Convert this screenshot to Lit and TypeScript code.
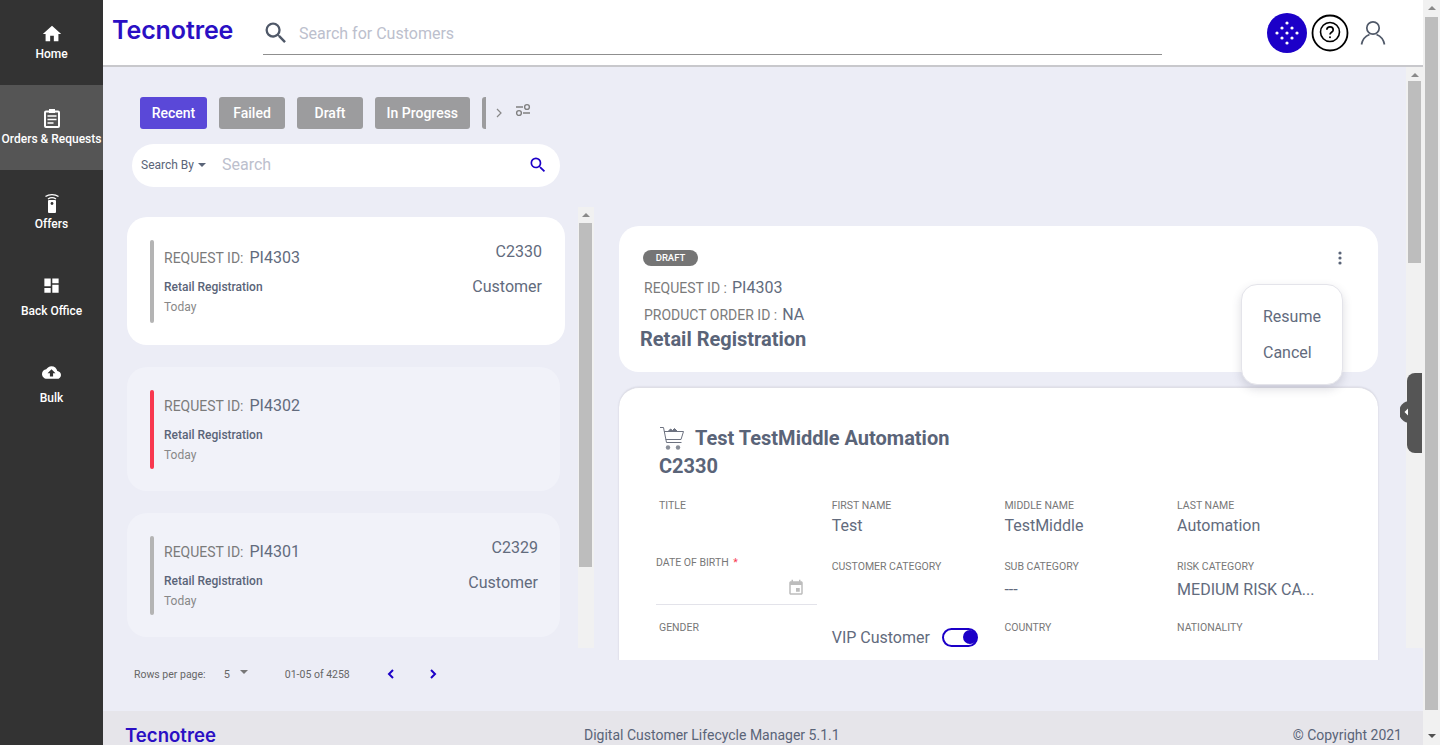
import { LitElement, css, html, svg } from 'lit'
import { customElement } from 'lit/decorators.js'

const paths = {
  home: 'M10 20v-6h4v6h5v-8h3L12 3 2 12h3v8z',
  dashboard: 'M3 13h8V3H3v10zm0 8h8v-6H3v6zm10 0h8V11h-8v10zm0-18v6h8V3h-8z',
  cloud: 'M19.35 10.04C18.67 6.59 15.64 4 12 4 9.11 4 6.6 5.64 5.35 8.04 2.34 8.36 0 10.91 0 14c0 3.31 2.69 6 6 6h13c2.76 0 5-2.24 5-5 0-2.64-2.05-4.78-4.65-4.96zM14 13v4h-4v-4H7l5-5 5 5h-3z',
  search: 'M15.5 14h-.79l-.28-.27A6.47 6.47 0 0 0 16 9.5 6.5 6.5 0 1 0 9.5 16c1.61 0 3.09-.59 4.23-1.57l.27.28v.79l5 4.99L20.49 19l-4.99-5zm-6 0C7.01 14 5 11.99 5 9.5S7.01 5 9.5 5 14 7.01 14 9.5 11.99 14 9.5 14z',
  calendar: 'M17 12h-5v5h5v-5zM16 1v2H8V1H6v2H5c-1.11 0-1.99.9-1.99 2L3 19c0 1.1.89 2 2 2h14c1.1 0 2-.9 2-2V5c0-1.1-.9-2-2-2h-1V1h-2zm3 18H5V8h14v11z',
}

const icon = (d: string, size: number, fill = 'currentColor') => html`
  <svg width=${size} height=${size} viewBox="0 0 24 24" fill=${fill}><path d=${d}></path></svg>
`

const ordersIcon = html`
  <svg width="18" height="20" viewBox="0 0 18 20" fill="none" stroke="#fff">
    <rect x="2" y="3.5" width="14" height="15.5" rx="1" stroke-width="2"></rect>
    <rect x="6" y="1" width="6" height="4" fill="#fff" stroke="none"></rect>
    <path d="M4.5 8h9M4.5 11.5h9M4.5 15h6" stroke-width="1.6"></path>
  </svg>
`

const offersIcon = html`
  <svg width="18" height="20" viewBox="0 0 18 20" fill="none">
    <path d="M2.5 3.6C6 .9 12 .9 15.5 3.6M5 6C7.4 4.4 10.6 4.4 13 6" stroke="#fff" stroke-width="1.3"></path>
    <rect x="5" y="7" width="8" height="13" rx="1" fill="#fff"></rect>
    <circle cx="9" cy="10.5" r="1.4" fill="#333"></circle>
  </svg>
`

const sparkIcon = svg`
  ${[[0, -10], [-5, -5], [5, -5], [-10, 0], [0, 0], [10, 0], [-5, 5], [5, 5], [0, 10]].map(
    ([x, y]) => svg`<circle cx=${20 + x} cy=${20 + y} r="1.6" fill="#fff"></circle>`,
  )}
`

const navItems = [
  { label: 'Home', icon: icon(paths.home, 22) },
  { label: 'Orders & Requests', icon: ordersIcon, active: true },
  { label: 'Offers', icon: offersIcon },
  { label: 'Back Office', icon: icon(paths.dashboard, 19) },
  { label: 'Bulk', icon: icon(paths.cloud, 19) },
]

const tabs = ['Recent', 'Failed', 'Draft', 'In Progress']

const requests = [
  { id: 'PI4303', selected: true, customer: 'C2330', status: 'grey' },
  { id: 'PI4302', selected: false, customer: '', status: 'red' },
  { id: 'PI4301', selected: false, customer: 'C2329', status: 'grey' },
]

@customElement('app-root')
export class AppRoot extends LitElement {
  renderNav() {
    return html`
      <nav class="nav">
        ${navItems.map(
          (item) => html`
            <div class="nav-item ${item.active ? 'active' : ''}">
              <span class="nav-icon">${item.icon}</span>
              <span>${item.label}</span>
            </div>
          `,
        )}
      </nav>
    `
  }

  renderHeader() {
    return html`
      <header class="header">
        <span class="logo">Tecnotree</span>
        <div class="global-search">
          <span class="global-search-icon">${icon(paths.search, 28, '#4f5868')}</span>
          <span>Search for Customers</span>
        </div>
        <div class="header-actions">
          <svg width="40" height="40" viewBox="0 0 40 40">
            <circle cx="20" cy="20" r="20" fill="#1c00c8"></circle>
            ${sparkIcon}
          </svg>
          <svg width="38" height="38" viewBox="0 0 38 38" fill="none" stroke="#000">
            <circle cx="19" cy="19" r="17.5" stroke-width="1.8"></circle>
            <circle cx="19" cy="18" r="9.5" stroke-width="1.6"></circle>
            <path d="M15.8 15.8c.3-4 6.4-3.8 6.4.1 0 2.4-3.2 2.4-3.2 4.7" stroke-width="1.7"></path>
            <circle cx="19" cy="23.2" r="1" fill="#000" stroke="none"></circle>
          </svg>
          <svg class="user" width="26" height="26" viewBox="0 0 26 26" fill="none" stroke="#4f5868" stroke-width="1.7">
            <circle cx="13" cy="8" r="6.2"></circle>
            <path d="M1.5 24.5C2.5 18.5 7 15.5 9.5 14.5M24.5 24.5C23.5 18.5 19 15.5 16.5 14.5"></path>
          </svg>
        </div>
      </header>
    `
  }

  renderRequest(r: (typeof requests)[number]) {
    return html`
      <article class="request ${r.selected ? 'selected' : ''}">
        <span class="status ${r.status}"></span>
        <div class="request-body">
          <div class="id-row"><span class="label">REQUEST ID:</span><span class="value">${r.id}</span></div>
          <div class="request-type">Retail Registration</div>
          <div class="request-date">Today</div>
        </div>
        ${r.customer
          ? html`
              <div class="request-side">
                <div class="value">${r.customer}</div>
                <div class="value side-type">Customer</div>
              </div>
            `
          : ''}
      </article>
    `
  }

  renderLeft() {
    return html`
      <section class="left">
        <div class="tabs">
          ${tabs.map((t, i) => html`<span class="tab ${i === 0 ? 'on' : ''}">${t}</span>`)}
          <span class="tab-sliver"></span>
          <svg class="tab-next" width="8" height="10" viewBox="0 0 8 10" fill="none" stroke="#888" stroke-width="1.2"><path d="M2 1l4 4-4 4"></path></svg>
          <svg class="tab-filter" width="16" height="16" viewBox="0 0 16 16" fill="none" stroke="#808080" stroke-width="1.4">
            <circle cx="4" cy="11" r="2.4"></circle>
            <circle cx="12" cy="5" r="2.4"></circle>
            <path d="M1 5h7M8 11h7"></path>
          </svg>
        </div>
        <div class="list-search">
          <span class="search-by">Search By</span>
          <span class="caret"></span>
          <span class="list-search-text">Search</span>
          ${icon(paths.search, 20, '#1c00c8')}
        </div>
        <div class="list-wrap">
          <div class="list">${requests.map((r) => this.renderRequest(r))}</div>
          <div class="scroll small">
            <span class="arrow up"></span>
            <span class="thumb"></span>
          </div>
        </div>
        <div class="pager">
          <span class="rows">Rows per page:</span>
          <span class="rows-count">5</span>
          <span class="caret grey"></span>
          <span class="range">01-05 of 4258</span>
          <svg width="8" height="12" viewBox="0 0 8 12" fill="none" stroke="#1c00c8" stroke-width="2"><path d="M6 2L2 6l4 4"></path></svg>
          <svg class="pager-next" width="8" height="12" viewBox="0 0 8 12" fill="none" stroke="#1c00c8" stroke-width="2"><path d="M2 2l4 4-4 4"></path></svg>
        </div>
      </section>
    `
  }

  renderField(label: string, value = '') {
    return html`
      <div class="field">
        <div class="field-label">${label}</div>
        <div class="field-value">${value}</div>
      </div>
    `
  }

  renderRight() {
    return html`
      <section class="right">
        <div class="card summary">
          <span class="badge">DRAFT</span>
          <div class="summary-row first"><span class="label">REQUEST ID :</span><span class="value">PI4303</span></div>
          <div class="summary-row"><span class="label">PRODUCT ORDER ID :</span><span class="value">NA</span></div>
          <div class="summary-title">Retail Registration</div>
          <svg class="more" width="4" height="14" viewBox="0 0 4 14" fill="#5a6478">
            <circle cx="2" cy="2" r="1.6"></circle><circle cx="2" cy="7" r="1.6"></circle><circle cx="2" cy="12" r="1.6"></circle>
          </svg>
          <div class="menu"><span>Resume</span><span>Cancel</span></div>
        </div>
        <div class="card customer">
          <div class="customer-name">
            <svg width="26" height="25" viewBox="0 0 26 25" fill="none" stroke="#6d7280" stroke-width="1">
              <path d="M1 1.5h3.5l3 15h15M5 5.5h19.5l-2.5 8H6.6"></path>
              <path d="M9 5.5l2.5-2.5 2 1.5 2-2 3 3z" fill="#6d7280"></path>
              <circle cx="9" cy="21.5" r="2.2" fill="#8a8f99" stroke="none"></circle>
              <circle cx="19" cy="21.5" r="2.2" fill="#8a8f99" stroke="none"></circle>
            </svg>
            <span>Test TestMiddle Automation</span>
          </div>
          <div class="customer-id">C2330</div>
          <div class="fields">
            ${this.renderField('TITLE')}
            ${this.renderField('FIRST NAME', 'Test')}
            ${this.renderField('MIDDLE NAME', 'TestMiddle')}
            ${this.renderField('LAST NAME', 'Automation')}
            <div class="field dob">
              <div class="field-label">DATE OF BIRTH <span class="req">*</span></div>
              <div class="dob-input">${icon(paths.calendar, 18, '#bdbdbd')}</div>
            </div>
            ${this.renderField('CUSTOMER CATEGORY')}
            ${this.renderField('SUB CATEGORY', '---')}
            ${this.renderField('RISK CATEGORY', 'MEDIUM RISK CA...')}
            ${this.renderField('GENDER')}
            <div class="vip">
              <span>VIP Customer</span>
              <span class="toggle"><span class="knob"></span></span>
            </div>
            ${this.renderField('COUNTRY')}
            ${this.renderField('NATIONALITY')}
          </div>
        </div>
        <div class="handle">
          <svg class="handle-knob" width="10" height="22" viewBox="0 0 10 22">
            <path d="M10 0A11 11 0 0 0 10 22z" fill="#555"></path>
            <path d="M8 7.5v7L4.500 11z" fill="#fff"></path>
          </svg>
        </div>
      </section>
    `
  }

  render() {
    return html`
      ${this.renderNav()}
      <div class="page">
        ${this.renderHeader()}
        <main class="workspace">
          ${this.renderLeft()}
          ${this.renderRight()}
          <div class="scroll inner">
            <span class="arrow up"></span>
            <span class="thumb"></span>
          </div>
        </main>
        <footer class="footer">
          <span class="logo small">Tecnotree</span>
          <span class="footer-title">Digital Customer Lifecycle Manager 5.1.1</span>
          <span>© Copyright 2021</span>
        </footer>
      </div>
      <div class="scroll outer">
        <span class="arrow up"></span>
        <span class="thumb"></span>
        <span class="arrow down"></span>
      </div>
    `
  }

  static styles = css`
    :host {
      color: #5a6478;
      display: flex;
      font-family: Roboto, sans-serif;
      height: 745px;
      overflow: hidden;
      width: 1440px;
    }
    .nav {
      background: #333;
      color: #fff;
      flex: 0 0 103px;
      font-size: 12px;
      font-weight: 500;
    }
    .nav-item {
      align-items: center;
      box-sizing: border-box;
      display: flex;
      flex-direction: column;
      gap: 1px;
      height: 85px;
      padding-top: 21px;
      white-space: nowrap;
    }
    .nav-item span:last-child {
      line-height: 16px;
    }
    .nav-item.active {
      background: #555;
    }
    .nav-item:first-child {
      gap: 0;
      padding-top: 22px;
    }
    .nav-item:nth-child(4) {
      gap: 6px;
      padding-top: 18px;
    }
    .nav-item:nth-child(5) {
      gap: 6px;
      padding-top: 20px;
    }
    .nav-icon {
      align-items: center;
      display: flex;
      height: 24px;
      justify-content: center;
    }
    .page {
      display: flex;
      flex: 0 0 1320px;
      flex-direction: column;
      height: 745px;
    }
    .header {
      align-items: center;
      background: #fff;
      border-bottom: 2px solid #c8c8cc;
      box-sizing: border-box;
      display: flex;
      flex: 0 0 67px;
      padding: 0 38px 5px 9px;
    }
    .logo {
      color: #2a0fc4;
      font-family: Inter, sans-serif;
      font-size: 25px;
      font-weight: 600;
      letter-spacing: -0.1px;
      line-height: 30px;
      width: 151px;
    }
    .logo.small {
      font-size: 18.6px;
      letter-spacing: 0;
      line-height: 19px;
      width: 459px;
    }
    .global-search {
      align-items: center;
      border-bottom: 1px solid #8f8f8f;
      box-sizing: border-box;
      color: #bcc0cd;
      display: flex;
      font-size: 16px;
      gap: 9px;
      height: 44px;
      margin-top: 5px;
      padding-top: 2px;
      width: 899px;
    }
    .global-search-icon {
      display: flex;
      margin-left: -1px;
    }
    .header-actions {
      align-items: center;
      display: flex;
      gap: 4px;
      margin-left: auto;
      margin-top: 6px;
    }
    .header-actions .user {
      margin-left: 7px;
      margin-right: -1px;
    }
    .workspace {
      background: #ecedf6;
      display: flex;
      flex: 1;
      min-height: 0;
    }
    .left {
      flex: 0 0 491px;
    }
    .tabs {
      align-items: center;
      display: flex;
      gap: 12px;
      margin: 30px 0 0 37px;
    }
    .tab {
      background: #9c9c9e;
      border-radius: 3px;
      box-sizing: border-box;
      color: #fff;
      font-size: 14px;
      font-weight: 500;
      line-height: 32px;
      min-width: 66px;
      padding: 0 11.5px;
      text-align: center;
    }
    .tab.on {
      background: #5a48d8;
      min-width: 67px;
    }
    .tab-sliver {
      background: #9c9c9e;
      border-radius: 3px 0 0 3px;
      height: 32px;
      width: 4px;
    }
    .tab-next {
      margin-left: -3px;
    }
    .tab-filter {
      margin-top: -6px;
    }
    .list-search {
      align-items: center;
      background: #fff;
      border-radius: 22px;
      box-sizing: border-box;
      display: flex;
      height: 43px;
      margin: 15px 0 0 29px;
      padding: 0 12px 2px 9px;
      width: 428px;
    }
    .search-by {
      font-size: 12px;
    }
    .caret {
      border-left: 4px solid transparent;
      border-right: 4px solid transparent;
      border-top: 4px solid currentColor;
      height: 0;
      margin-left: 4px;
      width: 0;
    }
    .caret.grey {
      color: #777;
      margin-left: 10px;
      margin-top: -5px;
    }
    .list-search-text {
      color: #bcc0cd;
      flex: 1;
      font-size: 16px;
      margin-left: 16px;
    }
    .list-wrap {
      display: flex;
      height: 441px;
      margin-top: 20px;
    }
    .list {
      box-sizing: border-box;
      display: flex;
      flex: 0 0 475px;
      flex-direction: column;
      gap: 22px;
      padding: 10px 0 0 24px;
    }
    .request {
      background: #f1f2f9;
      border-radius: 20px;
      box-sizing: border-box;
      display: flex;
      height: 124px;
      padding: 23px 22px 22px 23px;
      width: 433px;
    }
    .request.selected {
      background: #fff;
      height: 128px;
      padding-right: 23px;
      width: 438px;
    }
    .status {
      border-radius: 2px;
      flex: 0 0 4px;
    }
    .status.grey {
      background: #b4b4b4;
    }
    .status.red {
      background: #f8384f;
    }
    .request-body {
      flex: 1;
      padding: 6px 0 0 10px;
    }
    .selected .request-body {
      padding-top: 8px;
    }
    .id-row {
      align-items: center;
      display: flex;
      height: 20px;
    }
    .label {
      color: #7b7b7b;
      font-size: 14px;
      margin-right: 6px;
    }
    .summary-row .label {
      margin-right: 5px;
    }
    .value {
      color: #626b7d;
      font-size: 16px;
      line-height: 20px;
    }
    .request-type {
      font-size: 12px;
      font-weight: 500;
      line-height: 16px;
      margin-top: 11px;
    }
    .request-date {
      color: #888;
      font-size: 12px;
      line-height: 16px;
      margin-top: 4px;
    }
    .request-side {
      padding-top: 2px;
      text-align: right;
    }
    .side-type {
      margin-top: 15px;
    }
    .scroll {
      background: #f1f1f1;
      box-sizing: border-box;
      display: flex;
      flex-direction: column;
    }
    .scroll.small {
      flex: 0 0 16px;
    }
    .scroll.inner {
      flex: 0 0 17px;
      height: 581px;
    }
    .scroll.outer {
      flex: 0 0 17px;
      height: 745px;
    }
    .arrow {
      border-left: 4px solid transparent;
      border-right: 4px solid transparent;
      height: 0;
      margin: 6px auto 4px;
      width: 0;
    }
    .arrow.up {
      border-bottom: 4px solid #8a8a8a;
    }
    .arrow.down {
      border-top: 4px solid #505050;
      margin: 24px auto 0;
    }
    .thumb {
      background: #bdbdbd;
      margin: 0 2px 0 1px;
    }
    .scroll.small .thumb {
      height: 344px;
    }
    .scroll.small .arrow {
      margin-bottom: 6px;
    }
    .scroll.inner .thumb {
      height: 182px;
      margin: 0 2px;
    }
    .scroll.outer .arrow.up {
      margin-bottom: 5px;
    }
    .scroll.outer .thumb {
      height: 693px;
      margin: 2px 2px 0;
    }
    .pager {
      align-items: center;
      color: #666;
      display: flex;
      font-size: 10.5px;
      height: 52px;
      padding-left: 31px;
    }
    .rows-count {
      font-size: 11px;
      margin-left: 18px;
    }
    .range {
      margin: 0 37px;
    }
    .pager-next {
      margin-left: 34px;
    }
    .right {
      box-sizing: border-box;
      flex: 0 0 812px;
      height: 593px;
      overflow: hidden;
      padding: 159px 28px 0 25px;
    }
    .card {
      background: #fff;
      border-radius: 20px;
      box-sizing: border-box;
    }
    .summary {
      height: 146px;
      padding: 24px 0 0 24px;
    }
    .badge {
      background: #757575;
      border-radius: 8px;
      color: #fff;
      display: block;
      font-size: 9.5px;
      font-weight: 500;
      line-height: 16px;
      text-align: center;
      width: 55px;
    }
    .summary-row {
      align-items: center;
      display: flex;
      height: 20px;
      margin: 7px 0 0 1px;
    }
    .summary-row.first {
      margin-top: 12px;
    }
    .summary-title {
      font-size: 20px;
      font-weight: 700;
      line-height: 24px;
      margin: 2px 0 0 -3px;
    }
    .more {
      left: 1338px;
      position: absolute;
      top: 251px;
    }
    .menu {
      background: #fff;
      border: 1px solid #e4e4ea;
      border-radius: 16px;
      box-shadow: 0 4px 10px rgba(60, 60, 90, 0.18);
      box-sizing: border-box;
      color: #626b7d;
      display: flex;
      flex-direction: column;
      font-size: 16px;
      gap: 16px;
      height: 101px;
      left: 1241px;
      line-height: 20px;
      padding: 22px 0 0 21px;
      position: absolute;
      top: 284px;
      width: 102px;
      z-index: 2;
    }
    .customer {
      border-top: 1px solid #dfdfe6;
      box-shadow: 0 0 2px rgba(60, 60, 90, 0.2);
      height: 400px;
      margin-top: 15px;
      padding: 37px 0 0 40px;
    }
    .customer-name {
      align-items: center;
      display: flex;
      font-size: 20px;
      font-weight: 700;
      gap: 10px;
      height: 26px;
    }
    .customer-id {
      font-size: 20px;
      font-weight: 700;
      line-height: 28px;
      margin-top: 1px;
    }
    .fields {
      display: grid;
      grid-template-columns: repeat(4, 172.7px);
      grid-template-rows: 61px 61px 40px;
      margin-top: 19px;
    }
    .field-label {
      color: #777;
      font-size: 10.5px;
      line-height: 14px;
      white-space: nowrap;
    }
    .field-value {
      color: #626b7d;
      font-size: 16px;
      line-height: 20px;
      margin-top: 3px;
    }
    .field:nth-child(n + 5) .field-value {
      margin-top: 6px;
    }
    .dob {
      margin-left: -3px;
      margin-right: 15px;
    }
    .req {
      color: #f8384f;
      margin-left: 2px;
    }
    .dob-input {
      align-items: center;
      border-bottom: 1px solid #e3e3ea;
      box-sizing: border-box;
      display: flex;
      height: 41px;
      justify-content: flex-end;
      margin-top: -6px;
      padding: 8px 12px 0 0;
    }
    .dob .field-label {
      margin-top: -4px;
    }
    .vip {
      align-items: center;
      color: #626b7d;
      display: flex;
      font-size: 16px;
      gap: 12px;
      height: 20px;
      margin-top: 6px;
    }
    .toggle {
      align-items: center;
      border: 2px solid #1c00c8;
      border-radius: 10px;
      box-sizing: border-box;
      display: flex;
      height: 19px;
      justify-content: flex-end;
      width: 36px;
    }
    .knob {
      background: #1c00c8;
      border-radius: 50%;
      height: 14px;
      margin-right: -1px;
      width: 14px;
    }
    .handle {
      background: #555;
      border-radius: 8px 0 0 8px;
      height: 80px;
      left: 1407px;
      position: absolute;
      top: 373px;
      width: 15px;
    }
    .handle-knob {
      left: -7px;
      position: absolute;
      top: 28px;
    }
    .footer {
      background: #e6e5ea;
      box-sizing: border-box;
      display: flex;
      flex: 0 0 34px;
      font-size: 14px;
      line-height: 19px;
      padding: 15px 21px 0 22px;
    }
    .footer-title {
      flex: 1;
    }
  `
}

declare global {
  interface HTMLElementTagNameMap {
    'app-root': AppRoot
  }
}
